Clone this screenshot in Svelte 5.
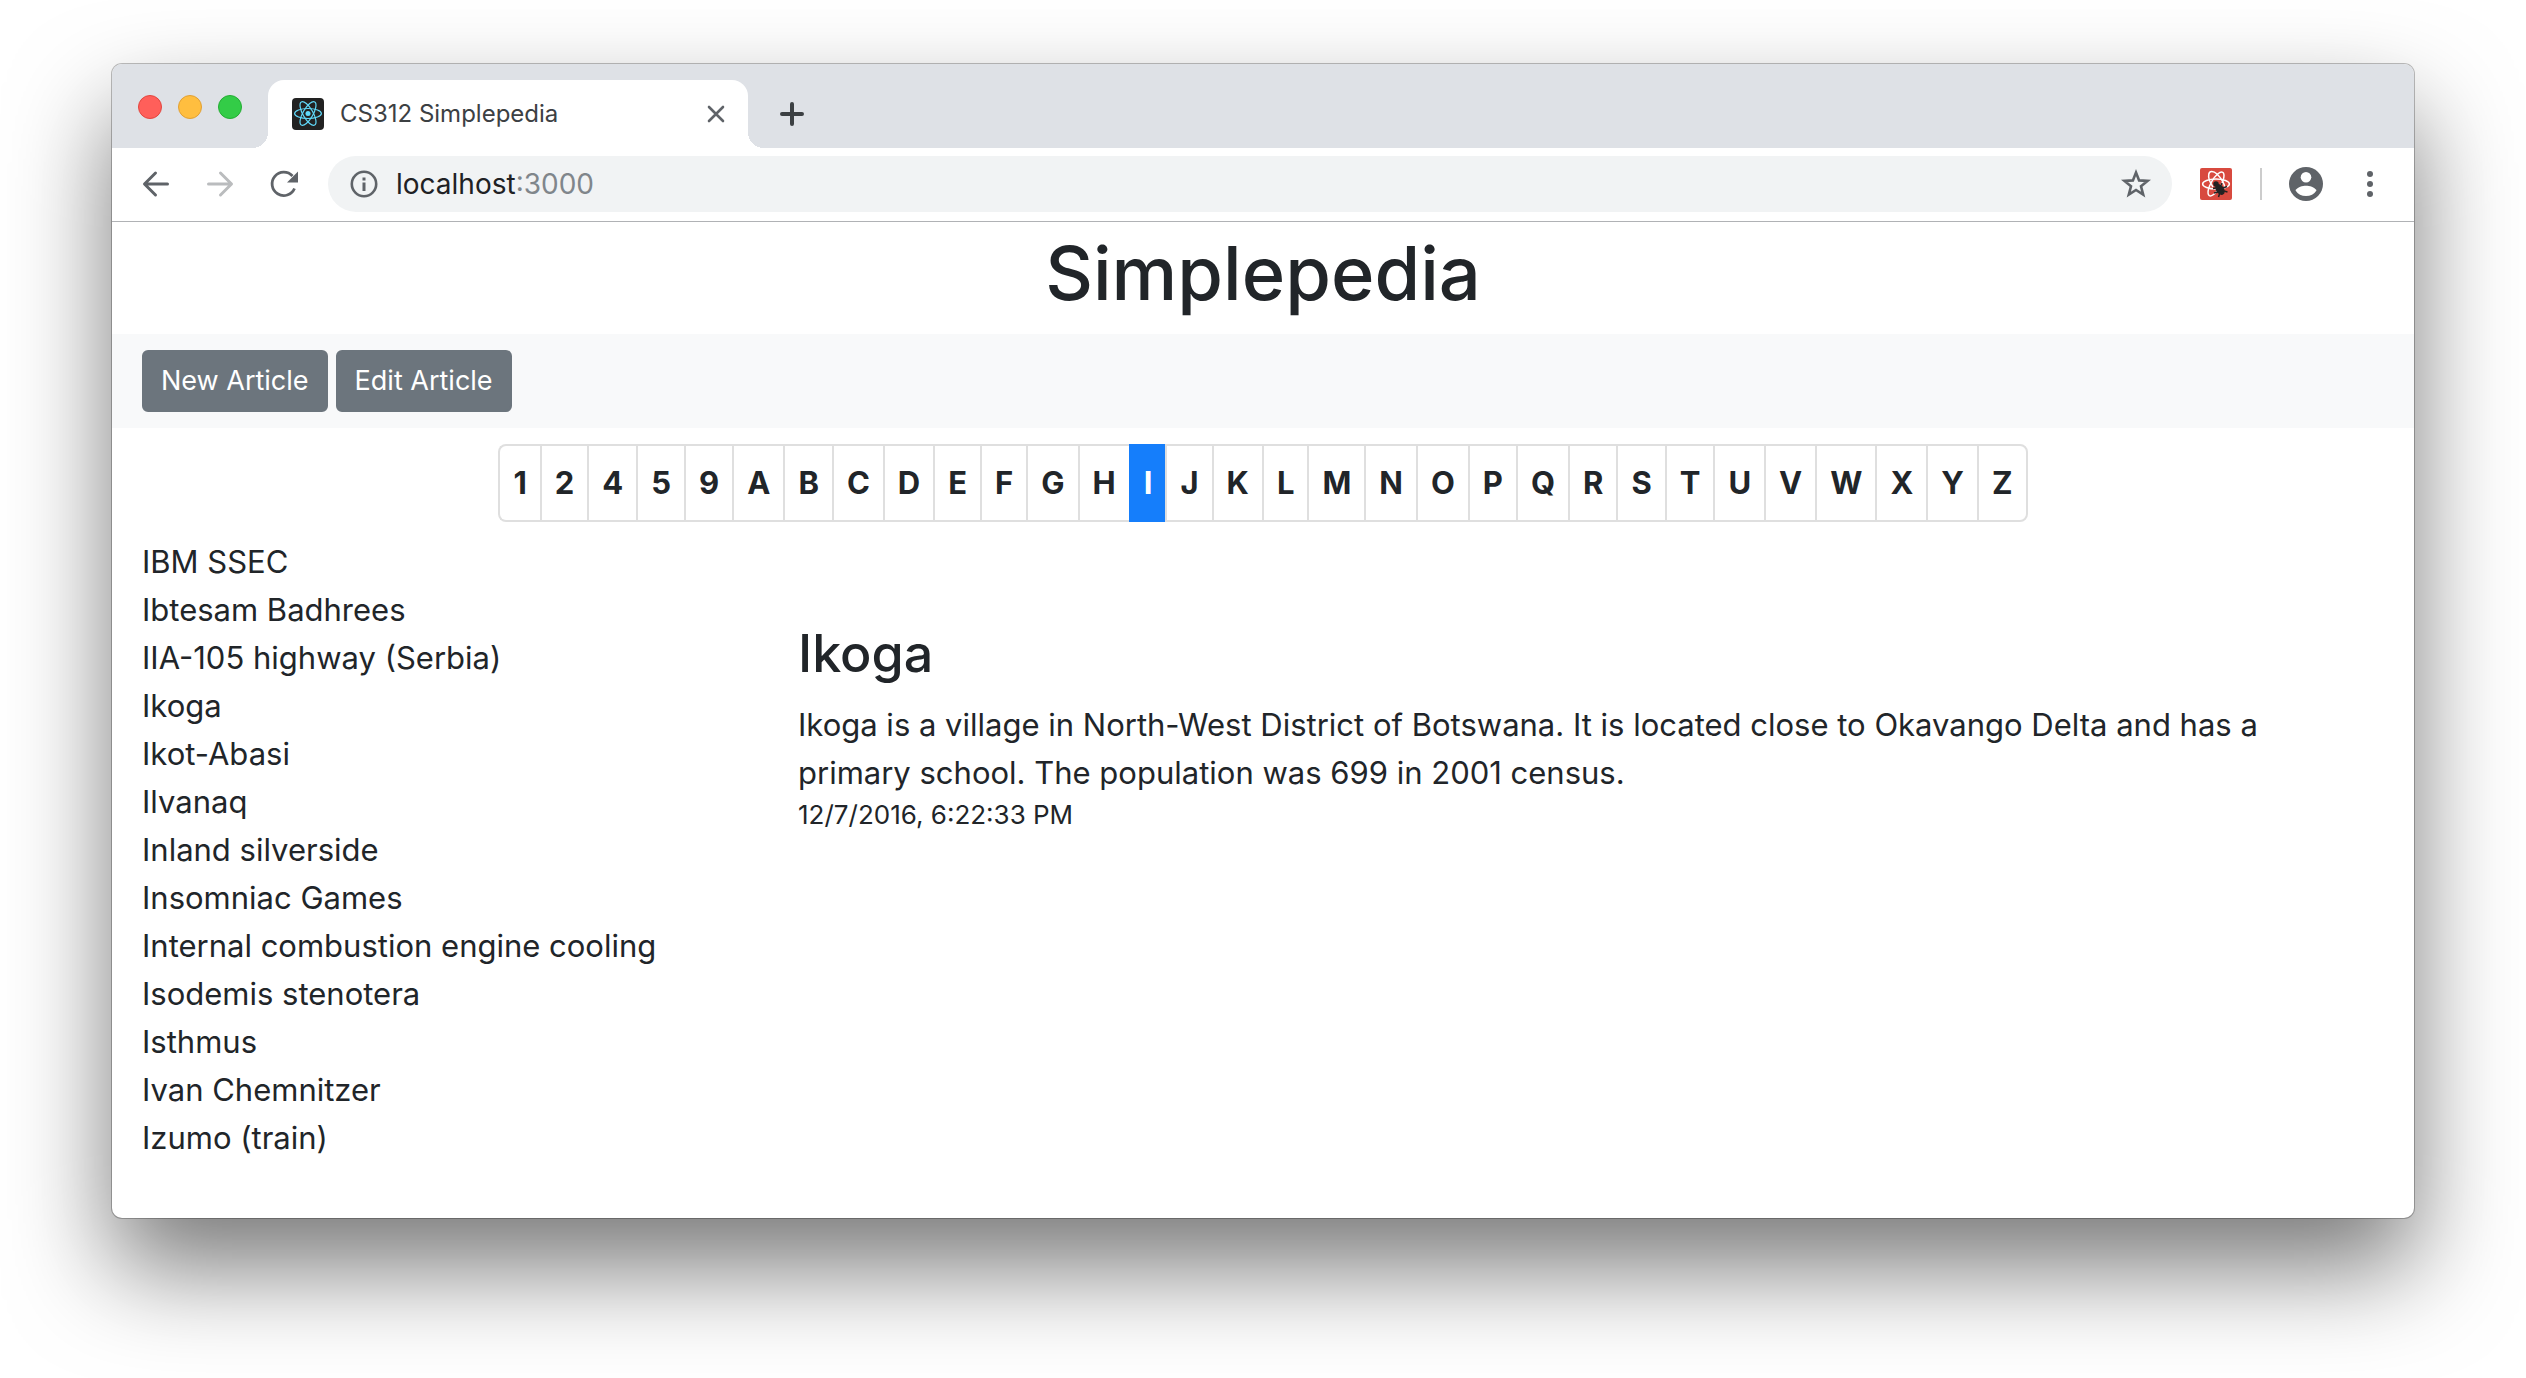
<script>
  const sections = '12459ABCDEFGHIJKLMNOPQRSTUVWXYZ'.split('');
  const titles = [
    'IBM SSEC',
    'Ibtesam Badhrees',
    'IIA-105 highway (Serbia)',
    'Ikoga',
    'Ikot-Abasi',
    'Ilvanaq',
    'Inland silverside',
    'Insomniac Games',
    'Internal combustion engine cooling',
    'Isodemis stenotera',
    'Isthmus',
    'Ivan Chemnitzer',
    'Izumo (train)'
  ];
  let current = $state('I');
  let host = $state('localhost');
</script>

<div class="desktop">
  <div class="window">
    <header class="tabstrip">
      <div class="lights">
        <button class="light red" aria-label="Close window"></button>
        <button class="light yellow" aria-label="Minimize window"></button>
        <button class="light green" aria-label="Zoom window"></button>
      </div>
      <div class="tab">
        <svg class="favicon" viewBox="0 0 32 32" aria-hidden="true">
          <rect width="32" height="32" rx="4" fill="#222" />
          <g fill="none" stroke="#61dafb" stroke-width="1.2">
            <ellipse cx="16" cy="15.5" rx="13.4" ry="5" />
            <ellipse cx="16" cy="15.5" rx="13.4" ry="5" transform="rotate(60 16 15.5)" />
            <ellipse cx="16" cy="15.5" rx="13.4" ry="5" transform="rotate(120 16 15.5)" />
          </g>
          <circle cx="16" cy="15.5" r="2.5" fill="#61dafb" />
        </svg>
        <span class="tab-title">CS312 Simplepedia</span>
        <button class="plain" aria-label="Close tab">
          <svg width="20" height="20" viewBox="0 0 20 20">
            <path d="M3 3L17 17M17 3L3 17" stroke="#5f6368" stroke-width="2.6" stroke-linecap="round" />
          </svg>
        </button>
      </div>
      <button class="plain new-tab" aria-label="New tab">
        <svg width="24" height="24" viewBox="0 0 24 24">
          <path d="M12 2V22M2 12H22" stroke="#3c4043" stroke-width="4" stroke-linecap="round" />
        </svg>
      </button>
    </header>

    <nav class="toolbar" aria-label="Browser">
      <div class="nav-buttons">
        <button class="plain" aria-label="Back">
          <svg width="32" height="32" viewBox="0 0 32 32">
            <path d="M27.5 16H5M15.5 5L4.5 16L15.5 27" fill="none" stroke="#5f6368" stroke-width="3" stroke-linecap="round" stroke-linejoin="round" />
          </svg>
        </button>
        <button class="plain" aria-label="Forward">
          <svg width="32" height="32" viewBox="0 0 32 32">
            <path d="M4.5 16H27M16.5 5L27.5 16L16.5 27" fill="none" stroke="#babcbe" stroke-width="3" stroke-linecap="round" stroke-linejoin="round" />
          </svg>
        </button>
        <button class="plain" aria-label="Reload">
          <svg width="32" height="32" viewBox="0 0 32 32">
            <path d="M26.5 20.5A11.7 11.7 0 1 1 24.5 8" fill="none" stroke="#5f6368" stroke-width="2.8" />
            <path d="M30 3.5V14.5H19Z" fill="#5f6368" />
          </svg>
        </button>
      </div>
      <div class="omnibox">
        <svg width="28" height="28" viewBox="0 0 28 28" aria-hidden="true">
          <circle cx="14" cy="14" r="12.2" fill="none" stroke="#5f6368" stroke-width="2.6" />
          <path d="M12.500 12.500H15.500V21H12.500ZM12.500 7.500H15.500V10.500H12.500Z" fill="#5f6368" />
        </svg>
        <label class="address">
          <input aria-label="Address" bind:value={host} /><span>:3000</span>
        </label>
        <button class="plain" aria-label="Bookmark this page">
          <svg width="32" height="32" viewBox="0 0 32 32">
            <path d="M16 4.500L19.100 12.400L27.600 12.900L21 18.300L23.200 26.600L16 22L8.800 26.600L11 18.300L4.400 12.900L12.900 12.400Z" fill="none" stroke="#5f6368" stroke-width="2.600" />
          </svg>
        </button>
      </div>
      <button class="plain" aria-label="React Developer Tools">
        <svg width="32" height="32" viewBox="0 0 32 32">
          <rect width="32" height="32" rx="2" fill="#d84a3f" />
          <g fill="none" stroke="#fff" stroke-width="1.5">
            <ellipse cx="16" cy="16" rx="13.4" ry="5" />
            <ellipse cx="16" cy="16" rx="13.4" ry="5" transform="rotate(120 16 16)" />
            <path d="M25 19.500C24 15 20 9 17 6C13 2.500 9.500 3 8.800 6C8.200 9 9.500 14 13 19" />
          </g>
          <g stroke="#222" stroke-width="1.5" fill="#222">
            <circle cx="16" cy="16" r="2" />
            <ellipse cx="20" cy="21.5" rx="3.2" ry="5.200" transform="rotate(-35 20 21.5)" />
            <path d="M16 20L13 20.500M18 24L14 25M19.500 26L18.500 29M21 17.500L22 15M23 20L27 18.500M24 23L27.500 24" fill="none" />
          </g>
        </svg>
      </button>
      <span class="divider"></span>
      <button class="plain" aria-label="Profile">
        <svg width="36" height="36" viewBox="0 0 36 36">
          <circle cx="18" cy="18" r="17" fill="#5f6368" />
          <circle cx="18" cy="11.3" r="5.3" fill="#fff" />
          <path d="M7.500 24.500C9.500 21 14.500 19.700 18 19.700S26.500 21 28.500 24.500C26 28.300 22.500 30 18 30S10 28.300 7.500 24.500Z" fill="#fff" />
        </svg>
      </button>
      <button class="plain" aria-label="Menu">
        <svg width="32" height="32" viewBox="0 0 32 32" fill="#5f6368">
          <circle cx="16" cy="6" r="3" />
          <circle cx="16" cy="16" r="3" />
          <circle cx="16" cy="26" r="3" />
        </svg>
      </button>
    </nav>

    <main>
      <h1>Simplepedia</h1>
      <div class="actions">
        <button>New Article</button>
        <button>Edit Article</button>
      </div>
      <ul class="sections">
        {#each sections as section}
          <li>
            <button class:active={section === current} onclick={() => (current = section)}>{section}</button>
          </li>
        {/each}
      </ul>
      <div class="columns">
        <ul class="titles">
          {#each titles as title}
            <li>{title}</li>
          {/each}
        </ul>
        <article>
          <h2>Ikoga</h2>
          <p>
            Ikoga is a village in North-West District of Botswana. It is located close to Okavango Delta
            and has a primary school. The population was 699 in 2001 census.
          </p>
          <time datetime="2016-12-07T18:22:33">12/7/2016, 6:22:33 PM</time>
        </article>
      </div>
    </main>
  </div>
</div>

<style>
  :global(body) {
    margin: 0;
    background: #fff;
  }
  .desktop {
    padding: 64px 112px 160px;
    overflow: hidden;
    font-family: Inter, 'Liberation Sans', sans-serif;
    color: #212529;
  }
  .window {
    border-radius: 10px;
    background: #fff;
    box-shadow:
      0 0 0 1px rgba(0, 0, 0, 0.25),
      0 50px 100px rgba(0, 0, 0, 0.53);
  }
  button,
  input {
    font: inherit;
    color: inherit;
    margin: 0;
  }
  svg {
    display: block;
    flex: none;
  }
  .plain {
    display: flex;
    padding: 0;
    border: 0;
    background: none;
  }

  .tabstrip {
    display: flex;
    height: 84px;
    background: #dee1e6;
    border-radius: 10px 10px 0 0;
  }
  .lights {
    display: flex;
    gap: 16px;
    padding: 31px 26px 0;
  }
  .light {
    width: 24px;
    height: 24px;
    padding: 0;
    border: 1px solid;
    border-radius: 50%;
  }
  .red {
    background: #ff5f5a;
    border-color: #e2463f;
  }
  .yellow {
    background: #ffbe3f;
    border-color: #e1a034;
  }
  .green {
    background: #33cc47;
    border-color: #24ad34;
  }
  .tab {
    position: relative;
    display: flex;
    align-items: center;
    gap: 16px;
    box-sizing: border-box;
    width: 480px;
    height: 68px;
    margin-top: 16px;
    padding: 0 22px 0 24px;
    border-radius: 16px 16px 0 0;
    background: #fff;
  }
  .tab::before,
  .tab::after {
    content: '';
    position: absolute;
    bottom: 0;
    width: 16px;
    height: 16px;
  }
  .tab::before {
    right: 100%;
    background: radial-gradient(circle at 0 0, #dee1e6 16px, #fff 16px);
  }
  .tab::after {
    left: 100%;
    background: radial-gradient(circle at 100% 0, #dee1e6 16px, #fff 16px);
  }
  .favicon {
    width: 32px;
    height: 32px;
  }
  .tab-title {
    flex: 1;
    padding-bottom: 2px;
    font-size: 24px;
    color: #3c4043;
  }
  .new-tab {
    align-self: center;
    margin: 16px 0 0 32px;
  }

  .toolbar {
    display: flex;
    align-items: center;
    height: 72px;
    padding: 0 28px 1px;
    border-bottom: 1px solid #b0b2b5;
  }
  .nav-buttons {
    display: flex;
    gap: 32px;
    margin-right: 28px;
  }
  .omnibox {
    flex: 1;
    display: flex;
    align-items: center;
    gap: 18px;
    height: 56px;
    margin-right: 28px;
    padding: 0 20px 0 22px;
    border-radius: 28px;
    background: #f1f3f4;
  }
  .address {
    flex: 1;
    display: flex;
    font-size: 28px;
    color: #80868b;
  }
  .address input {
    field-sizing: content;
    padding: 0;
    border: 0;
    outline: 0;
    background: none;
    color: #202124;
  }
  .divider {
    width: 2px;
    height: 32px;
    margin: 0 26px 0 28px;
    background: #ccc;
  }
  .toolbar > :last-child {
    margin-left: 30px;
  }

  h1 {
    margin: 0;
    padding: 3px 0 13px;
    font-size: 74px;
    font-weight: 500;
    line-height: 96px;
    text-align: center;
  }
  .actions {
    display: flex;
    gap: 8px;
    padding: 16px 30px;
    background: #f8f9fa;
  }
  .actions button {
    padding: 8px 17px;
    border: 2px solid #6c757d;
    border-radius: 6px;
    background: #6c757d;
    color: #fff;
    font-size: 27px;
    line-height: 42px;
  }
  ul {
    margin: 0;
    padding: 0;
    list-style: none;
  }
  .sections {
    display: flex;
    justify-content: center;
    padding: 16px 0;
  }
  .sections button {
    display: block;
    padding: 13px;
    border: 2px solid #dfdfdf;
    border-right-width: 0;
    background: #fff;
    font-size: 31px;
    font-weight: 700;
    line-height: 48px;
  }
  .sections li:first-child button {
    border-radius: 8px 0 0 8px;
  }
  .sections li:last-child button {
    border-right-width: 2px;
    border-radius: 0 8px 8px 0;
  }
  .sections button.active {
    border-color: #157efb;
    background: #157efb;
    color: #fff;
  }
  .columns {
    display: grid;
    grid-template-columns: 656px 1fr;
    padding: 0 80px 56px 30px;
    font-size: 31px;
    line-height: 48px;
  }
  article {
    padding-top: 82px;
  }
  h2 {
    margin: 0 0 14px;
    font-size: 52px;
    font-weight: 500;
    line-height: 67px;
  }
  p {
    margin: 0;
  }
  time {
    display: block;
    font-size: 26px;
    line-height: 36px;
  }
</style>
